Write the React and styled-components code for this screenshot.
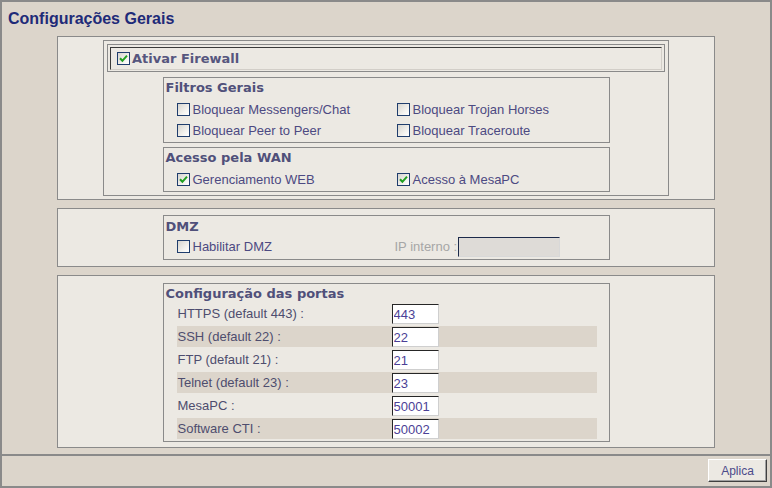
import React from "react";
import styled, { createGlobalStyle } from "styled-components";

const Global = createGlobalStyle`
  html, body { margin: 0; padding: 0; background: #dcd5cb; }
  body { font-family: "Liberation Sans", Arial, sans-serif; }
`;

const Frame = styled.div`
  box-sizing: border-box;
  width: 772px;
  height: 488px;
  border: 2px solid #8a8a8a;
  background: #dcd5cb;
  display: flex;
  flex-direction: column;
  font-family: "Liberation Sans", Arial, sans-serif;
`;

const Title = styled.h1`
  box-sizing: border-box;
  height: 34px;
  margin: 0;
  padding: 8px 0 0 6px;
  font: bold 16px/18px "Liberation Sans", Arial, sans-serif;
  color: #1e2a78;
`;

const Panels = styled.main`
  flex: 1;
  display: flex;
  flex-direction: column;
  gap: 8px;
`;

const Panel = styled.section`
  margin: 0 55px;
  border: 1px solid #8a8a8a;
  background: #ece9e3;
  padding: ${(p) => p.$pad};
  display: flex;
  flex-direction: column;
  align-items: center;
`;

const Group = styled.div`
  box-sizing: border-box;
  width: 566px;
  border: 1px solid #8a8a8a;
  padding: 3px;
  display: flex;
  flex-direction: column;
  align-items: center;
`;

const FirewallField = styled.div`
  align-self: stretch;
  border: 1px solid #8a8a8a;
  padding: 2px 2px 1px;
`;

const Inset = styled.label`
  box-sizing: border-box;
  height: 23px;
  display: flex;
  align-items: center;
  gap: 2px;
  padding-left: 6px;
  border: 1px solid;
  border-color: #3a3a3a #d2cec8 #d2cec8 #3a3a3a;
  font: bold 13px/15px "DejaVu Sans", Verdana, sans-serif;
  color: #56567e;
`;

const SubBox = styled.fieldset`
  box-sizing: border-box;
  width: 447px;
  margin: ${(p) => p.$mt || 0}px 0 0;
  border: 1px solid #8a8a8a;
  padding: ${(p) => p.$pt || 2}px 0 ${(p) => p.$pb || 0}px;
  min-width: 0;
`;

const Heading = styled.div`
  font: bold 13px/15px "DejaVu Sans", Verdana, sans-serif;
  color: #50507a;
  padding-left: 2px;
  margin-bottom: ${(p) => p.$gap}px;
`;

const CheckGrid = styled.div`
  display: grid;
  grid-template-columns: 220px 1fr;
  grid-auto-rows: 21px;
  padding-left: 13px;
`;

const CheckItem = styled.label`
  display: flex;
  align-items: center;
  gap: 3px;
  font-size: 13px;
  color: #4c4a82;
  white-space: nowrap;
`;

const Box = styled.span`
  box-sizing: border-box;
  flex: none;
  width: 13px;
  height: 13px;
  border: 1px solid #1f3d6d;
  background: linear-gradient(135deg, #d6d4ce 0%, #f4f3f0 65%, #ffffff 100%);
  display: inline-flex;
  align-items: center;
  justify-content: center;
`;

const Check = ({ checked }) => (
  <Box>
    {checked && (
      <svg width="11" height="11" viewBox="0 0 11 11">
        <path d="M2 5.2 L4.4 7.8 L9 2.6" fill="none" stroke="#21a021" strokeWidth="2" />
      </svg>
    )}
  </Box>
);

const DmzRow = styled.div`
  display: grid;
  grid-template-columns: 218px 63px 102px;
  justify-content: start;
  align-items: center;
  height: 21px;
  padding-left: 13px;
`;

const Muted = styled.span`
  font-size: 13px;
  color: #a6a6a6;
  white-space: nowrap;
`;

const IpInput = styled.input`
  box-sizing: border-box;
  width: 102px;
  height: 20px;
  margin: 0;
  border: 1px solid;
  border-color: #1c2a4a #d8d8d8 #d8d8d8 #1c2a4a;
  background: #dedbd7;
`;

const PortRows = styled.div`
  display: flex;
  flex-direction: column;
  gap: 2px;
  padding: 0 12px 0 13px;
`;

const PortRow = styled.div`
  display: grid;
  grid-template-columns: 215px 47px;
  align-items: center;
  height: 21px;
  background: ${(p) => (p.$shaded ? "#dcd5cb" : "transparent")};
`;

const PortLabel = styled.span`
  padding-left: 1px;
  font-size: 13px;
  color: #4e4d6e;
  white-space: nowrap;
`;

const PortInput = styled.input`
  box-sizing: border-box;
  width: 47px;
  height: 20px;
  margin: 0;
  padding: 1px 0 0 1px;
  border: 1px solid;
  border-color: #262626 #cfcfcf #cfcfcf #262626;
  background: #fff;
  font: 13px "Liberation Sans", Arial, sans-serif;
  color: #4b3f96;
`;

const Footer = styled.footer`
  box-sizing: border-box;
  height: 32px;
  border-top: 2px solid #8a8a8a;
  display: flex;
  justify-content: flex-end;
  align-items: flex-start;
  padding: 3px 3px 0 0;
`;

const Button = styled.button`
  box-sizing: border-box;
  width: 59px;
  height: 23px;
  margin: 0;
  padding: 0;
  border: 1px solid;
  border-color: #ffffff #404040 #404040 #ffffff;
  box-shadow: inset -1px -1px 0 #a0a0a0;
  background: #ece9e3;
  font: 12px "Liberation Sans", Arial, sans-serif;
  color: #4b4a8a;
`;

const ports = [
  ["HTTPS (default 443) :", "443"],
  ["SSH (default 22) :", "22"],
  ["FTP (default 21) :", "21"],
  ["Telnet (default 23) :", "23"],
  ["MesaPC :", "50001"],
  ["Software CTI :", "50002"],
];

export default function App() {
  return (
    <>
      <Global />
      <Frame>
        <Title>Configurações Gerais</Title>
        <Panels>
          <Panel $pad="3px">
            <Group>
              <FirewallField>
                <Inset>
                  <Check checked />
                  Ativar Firewall
                </Inset>
              </FirewallField>
              <SubBox $mt={5} $pb={1}>
                <Heading $gap={4}>Filtros Gerais</Heading>
                <CheckGrid>
                  <CheckItem><Check />Bloquear Messengers/Chat</CheckItem>
                  <CheckItem><Check />Bloquear Trojan Horses</CheckItem>
                  <CheckItem><Check />Bloquear Peer to Peer</CheckItem>
                  <CheckItem><Check />Bloquear Traceroute</CheckItem>
                </CheckGrid>
              </SubBox>
              <SubBox $mt={4} $pb={1}>
                <Heading $gap={4}>Acesso pela WAN</Heading>
                <CheckGrid>
                  <CheckItem><Check checked />Gerenciamento WEB</CheckItem>
                  <CheckItem><Check checked />Acesso à MesaPC</CheckItem>
                </CheckGrid>
              </SubBox>
            </Group>
          </Panel>

          <Panel $pad="6px">
            <SubBox $pt={3} $pb={2}>
              <Heading $gap={2}>DMZ</Heading>
              <DmzRow>
                <CheckItem><Check />Habilitar DMZ</CheckItem>
                <Muted>IP interno :</Muted>
                <IpInput disabled />
              </DmzRow>
            </SubBox>
          </Panel>

          <Panel $pad="7px 0 5px">
            <SubBox $pb={2}>
              <Heading $gap={2}>Configuração das portas</Heading>
              <PortRows>
                {ports.map(([label, value], i) => (
                  <PortRow key={label} $shaded={i % 2 === 1}>
                    <PortLabel>{label}</PortLabel>
                    <PortInput defaultValue={value} />
                  </PortRow>
                ))}
              </PortRows>
            </SubBox>
          </Panel>
        </Panels>
        <Footer>
          <Button>Aplica</Button>
        </Footer>
      </Frame>
    </>
  );
}
